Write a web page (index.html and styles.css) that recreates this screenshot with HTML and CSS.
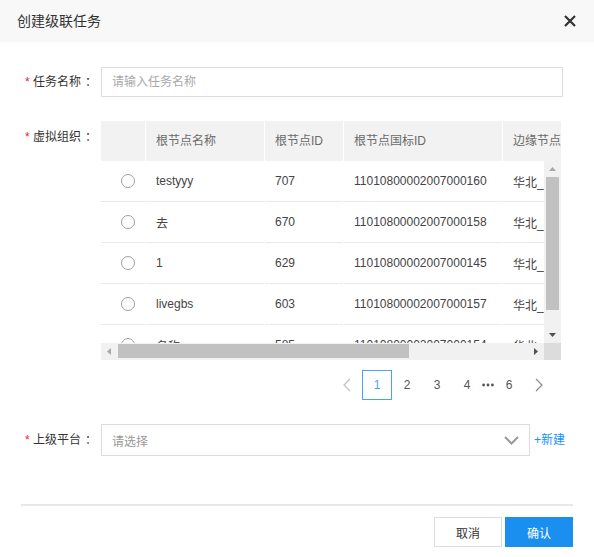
FILE: index.html
```html
<!DOCTYPE html>
<html lang="zh-CN">
<head>
<meta charset="utf-8">
<title>创建级联任务</title>
<link rel="stylesheet" href="styles.css">
</head>
<body>
<div class="dialog">
  <div class="dlg-header">
    <span class="dlg-title">创建级联任务</span>
    <svg class="close" width="12" height="12" viewBox="0 0 12 12"><path d="M1 1L11 11M11 1L1 11" stroke="#333" stroke-width="2.2" fill="none"/></svg>
  </div>

  <div class="dlg-body">
    <div class="form-item">
      <label class="label label-input"><span class="req">*</span>任务名称<span class="colon">：</span></label>
      <div class="control">
        <input class="input" type="text" placeholder="请输入任务名称">
      </div>
    </div>

    <div class="form-item">
      <label class="label"><span class="req">*</span>虚拟组织<span class="colon">：</span></label>
      <div class="control">
        <div class="table">
          <div class="thead">
            <div class="row head">
              <div class="cell"></div>
              <div class="cell">根节点名称</div>
              <div class="cell">根节点ID</div>
              <div class="cell">根节点国标ID</div>
              <div class="cell">边缘节点名称</div>
            </div>
          </div>
          <div class="tbody">
            <div class="viewport">
              <div class="row body">
                <div class="cell radio-cell"><span class="radio"></span></div>
                <div class="cell">testyyy</div>
                <div class="cell">707</div>
                <div class="cell">11010800002007000160</div>
                <div class="cell">华北_北京节点</div>
              </div>
              <div class="row body">
                <div class="cell radio-cell"><span class="radio"></span></div>
                <div class="cell">去</div>
                <div class="cell">670</div>
                <div class="cell">11010800002007000158</div>
                <div class="cell">华北_北京节点</div>
              </div>
              <div class="row body">
                <div class="cell radio-cell"><span class="radio"></span></div>
                <div class="cell">1</div>
                <div class="cell">629</div>
                <div class="cell">11010800002007000145</div>
                <div class="cell">华北_北京节点</div>
              </div>
              <div class="row body">
                <div class="cell radio-cell"><span class="radio"></span></div>
                <div class="cell">livegbs</div>
                <div class="cell">603</div>
                <div class="cell">11010800002007000157</div>
                <div class="cell">华北_北京节点</div>
              </div>
              <div class="row body">
                <div class="cell radio-cell"><span class="radio"></span></div>
                <div class="cell">名称aaa</div>
                <div class="cell">585</div>
                <div class="cell">11010800002007000154</div>
                <div class="cell">华北_北京节点</div>
              </div>
            </div>
            <div class="vbar">
              <div class="sb-btn"><svg width="7" height="4" viewBox="0 0 7 4"><path d="M0 4L3.5 0L7 4Z" fill="#a8a8a8"/></svg></div>
              <div class="vthumb"></div>
              <div class="sb-fill"></div>
              <div class="sb-btn"><svg width="7" height="4" viewBox="0 0 7 4"><path d="M0 0L3.5 4L7 0Z" fill="#505050"/></svg></div>
            </div>
            <div class="hbar">
              <div class="sb-btn"><svg width="4" height="7" viewBox="0 0 4 7"><path d="M4 0L0 3.5L4 7Z" fill="#a8a8a8"/></svg></div>
              <div class="hthumb"></div>
              <div class="sb-fill"></div>
              <div class="sb-btn"><svg width="4" height="7" viewBox="0 0 4 7"><path d="M0 0L4 3.5L0 7Z" fill="#505050"/></svg></div>
            </div>
            <div class="corner"></div>
          </div>
        </div>

        <div class="pager">
          <span class="pg-item pg-arrow"><svg width="8" height="14" viewBox="0 0 8 14"><path d="M7 1L1 7L7 13" stroke="#c0c0c0" stroke-width="1.2" fill="none"/></svg></span>
          <span class="pg-item active">1</span>
          <span class="pg-item">2</span>
          <span class="pg-item">3</span>
          <span class="pg-item">4</span>
          <span class="pg-more"><svg width="12" height="4" viewBox="0 0 12 4"><circle cx="1.6" cy="2" r="1.4" fill="#555"/><circle cx="6" cy="2" r="1.4" fill="#555"/><circle cx="10.4" cy="2" r="1.4" fill="#555"/></svg></span>
          <span class="pg-item">6</span>
          <span class="pg-item pg-arrow"><svg width="8" height="14" viewBox="0 0 8 14"><path d="M1 1L7 7L1 13" stroke="#8a8a8a" stroke-width="1.2" fill="none"/></svg></span>
        </div>
      </div>
    </div>

    <div class="form-item last">
      <label class="label"><span class="req">*</span>上级平台<span class="colon">：</span></label>
      <div class="control select-row">
        <div class="select">
          <span class="select-ph">请选择</span>
          <svg class="chevron" width="15" height="9" viewBox="0 0 15 9"><path d="M1 1L7.5 7.5L14 1" stroke="#9a9a9a" stroke-width="2" fill="none"/></svg>
        </div>
        <a class="add-link">+新建</a>
      </div>
    </div>
  </div>

  <div class="dlg-footer">
    <div class="divider"></div>
    <div class="btns">
      <button class="btn btn-default">取消</button>
      <button class="btn btn-primary">确认</button>
    </div>
  </div>
</div>
</body>
</html>
```

FILE: styles.css
```css
* {
  box-sizing: border-box;
}

html,
body {
  margin: 0;
  padding: 0;
}

body {
  width: 594px;
  height: 557px;
  overflow: hidden;
  background: #fff;
  font-family: "Liberation Sans", "Noto Sans CJK SC", sans-serif;
  font-size: 12px;
  color: #333;
}

.dialog {
  width: 594px;
  height: 557px;
  display: flex;
  flex-direction: column;
}

/* header */
.dlg-header {
  height: 42px;
  flex: none;
  background: #f8f8f8;
  display: flex;
  align-items: center;
  justify-content: space-between;
  padding: 0 18px 0 17px;
}

.dlg-title {
  font-size: 14px;
  color: #333;
  line-height: 20px;
}

.close {
  display: block;
}

/* body / form */
.dlg-body {
  padding: 25px 31px 0 21px;
}

.form-item {
  display: flex;
  align-items: flex-start;
  margin-bottom: 24px;
}

.form-item.last {
  margin-bottom: 0;
}

.label {
  width: 80px;
  height: 32px;
  flex: none;
  padding-left: 4px;
  line-height: 32px;
  color: #333;
  white-space: nowrap;
}

.label-input {
  height: 30px;
  line-height: 30px;
}

.req {
  display: inline-block;
  width: 8px;
  color: #f5222d;
}

.colon {
  padding-left: 4px;
}

.control {
  flex: 1;
  min-width: 0;
}

.input {
  display: block;
  width: 100%;
  height: 30px;
  border: 1px solid #dcdcdc;
  border-radius: 0;
  padding: 0 10px;
  font-family: "Liberation Sans", "Noto Sans CJK SC", sans-serif;
  font-size: 12px;
  color: #333;
  outline: none;
  background: #fff;
}

.input::placeholder {
  color: #a9a9a9;
}

/* table */
.table {
  width: 460px;
}

.thead {
  height: 40px;
  overflow: hidden;
}

.row {
  display: grid;
  grid-template-columns: 44px 118px 78px 158px 225px;
  column-gap: 1px;
  width: max-content;
  background: #fff;
}

.cell {
  padding-left: 10px;
  white-space: nowrap;
  overflow: hidden;
}

.head .cell {
  height: 40px;
  line-height: 40px;
  background: #f2f2f2;
  color: #6a6a6a;
}

.body .cell {
  height: 41px;
  border-bottom: 1px solid #e8e8e8;
  display: flex;
  align-items: center;
  color: #444;
}

.body .radio-cell {
  padding-left: 20px;
}

.radio {
  display: block;
  width: 14px;
  height: 14px;
  border: 1px solid #a0a0a0;
  border-radius: 50%;
  background: #fff;
}

.tbody {
  display: grid;
  grid-template-columns: 443px 17px;
  grid-template-rows: 182px 17px;
}

.viewport {
  overflow: hidden;
}

.vbar {
  background: #f1f1f1;
  display: flex;
  flex-direction: column;
}

.hbar {
  background: #f1f1f1;
  display: flex;
}

.sb-btn {
  flex: none;
  width: 17px;
  height: 16px;
  display: flex;
  align-items: center;
  justify-content: center;
}

.hbar .sb-btn {
  width: 16px;
  height: 17px;
}

.sb-btn svg {
  display: block;
}

.sb-fill {
  flex: 1;
}

.vthumb {
  flex: none;
  height: 133px;
  margin: 0 2px;
  background: #c1c1c1;
}

.hthumb {
  flex: none;
  width: 291px;
  margin: 1px 0 2px 1px;
  background: #c1c1c1;
}

.corner {
  background: #dcdcdc;
}

/* pager */
.pager {
  margin-top: 10px;
  height: 30px;
  display: flex;
  justify-content: flex-end;
  align-items: center;
  padding-right: 9px;
}

.pg-item {
  width: 30px;
  height: 30px;
  display: flex;
  align-items: center;
  justify-content: center;
  color: #555;
  font-size: 12px;
}

.pg-item.active {
  border: 1px solid #4aa3ee;
  color: #4aa3ee;
}

.pg-arrow svg,
.pg-more svg {
  display: block;
}

.pg-more {
  width: 12px;
  height: 30px;
  display: flex;
  align-items: center;
  justify-content: center;
}

/* select */
.select-row {
  display: flex;
  align-items: center;
}

.select {
  width: 429px;
  height: 32px;
  flex: none;
  border: 1px solid #dcdcdc;
  display: flex;
  align-items: center;
  justify-content: space-between;
  padding: 0 10px 0 10px;
}

.select-ph {
  color: #999;
}

.chevron {
  display: block;
}

.add-link {
  margin-left: 4px;
  color: #1890ff;
  line-height: 32px;
  white-space: nowrap;
}

/* footer */
.dlg-footer {
  padding: 0 21px;
}

.divider {
  margin-top: 48px;
  height: 2px;
  background: #e8e8e8;
}

.btns {
  margin-top: 11px;
  display: flex;
  justify-content: flex-end;
  gap: 3px;
}

.btn {
  width: 68px;
  height: 30px;
  font-family: "Liberation Sans", "Noto Sans CJK SC", sans-serif;
  font-size: 12px;
  border-radius: 0;
  cursor: pointer;
}

.btn-default {
  background: #fff;
  border: 1px solid #dcdcdc;
  color: #333;
}

.btn-primary {
  background: #1b8ff0;
  border: 1px solid #1b8ff0;
  color: #fff;
}
```
